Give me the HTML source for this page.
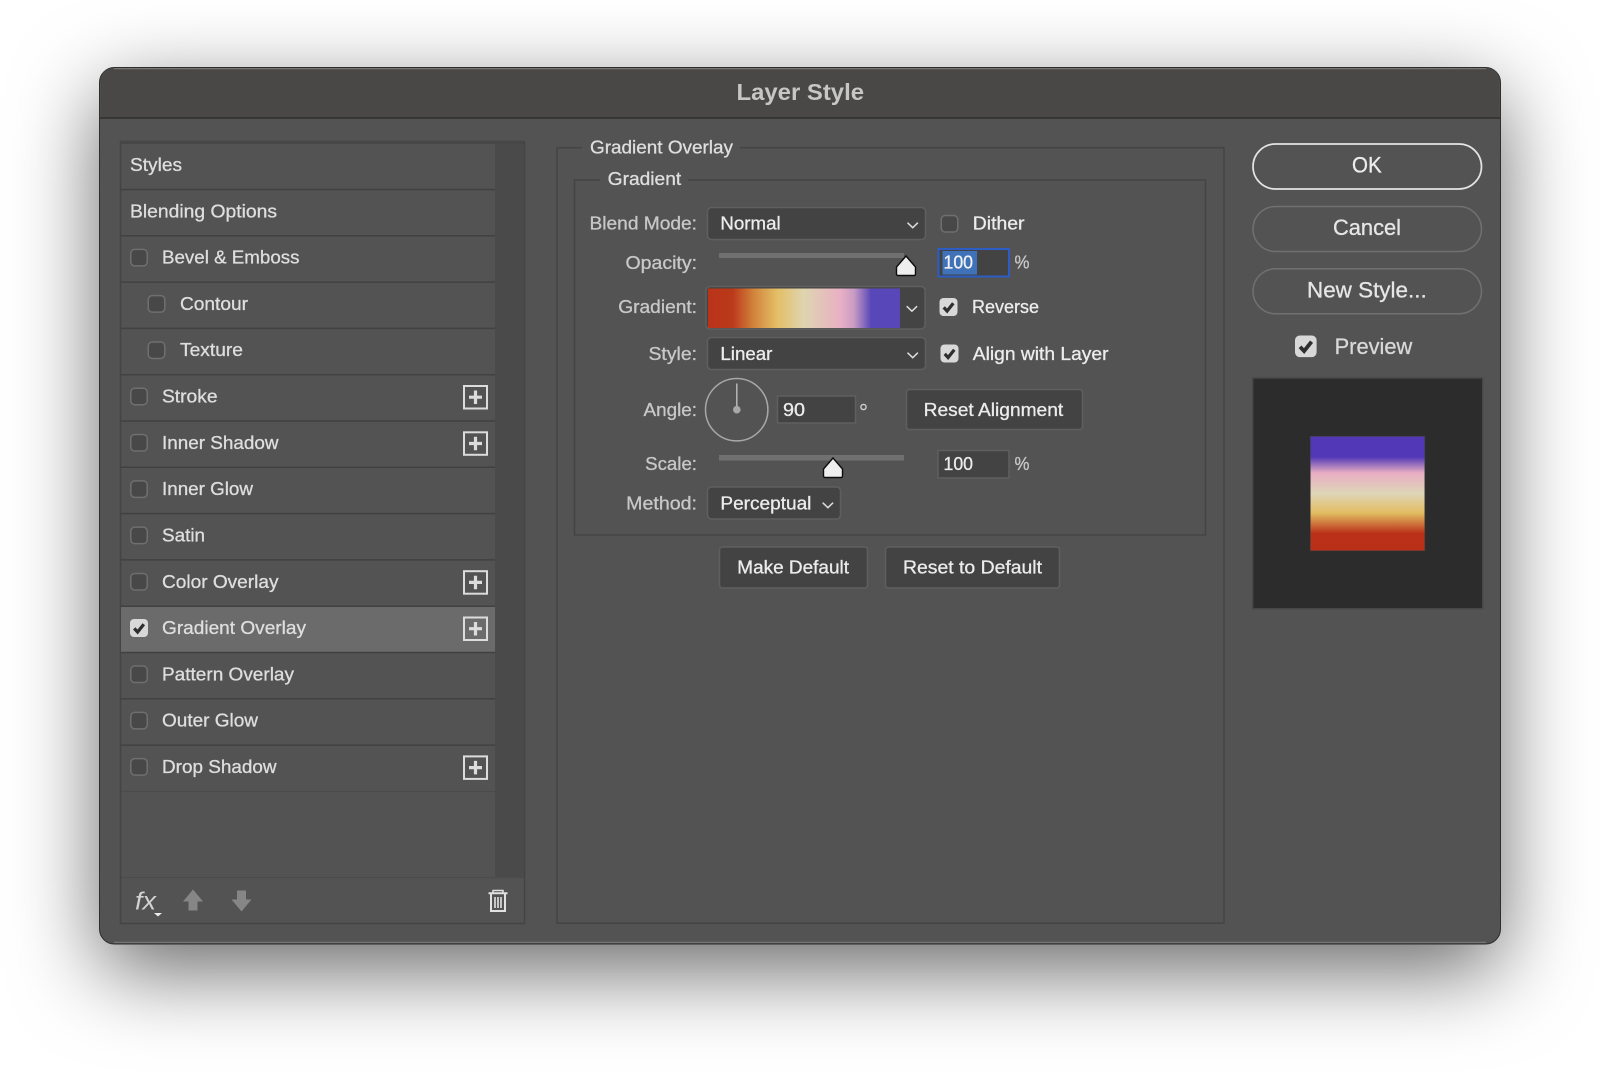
<!DOCTYPE html>
<html lang="en">
<head>
<meta charset="utf-8">
<title>Layer Style</title>
<style>
html,body{margin:0;padding:0;width:1600px;height:1076px;background:#fff;overflow:hidden}
#shadow{position:absolute;left:100px;top:68px;width:1400px;height:876px;border-radius:16px;background:#535353;box-shadow:0 26px 85px rgba(0,0,0,.6)}
svg{position:absolute;left:0;top:0}
text{font-family:"Liberation Sans",sans-serif;font-size:18.5px;fill:#dedede;stroke:#dedede;stroke-width:.3px}
.lab{fill:#c8c8c8;stroke:#c8c8c8}
.w{fill:#ececec;stroke:#ececec}
</style>
</head>
<body>
<div id="shadow"></div>
<svg width="1600" height="1076" viewBox="0 0 1600 1076" xmlns="http://www.w3.org/2000/svg">
<defs>
<linearGradient id="gh" x1="0" x2="1" y1="0" y2="0">
<stop offset="0" stop-color="#b93319"/><stop offset=".13" stop-color="#bb3a1b"/><stop offset=".24" stop-color="#d2853c"/><stop offset=".36" stop-color="#e3bf66"/><stop offset=".5" stop-color="#dfd4b0"/><stop offset=".69" stop-color="#e9b0c4"/><stop offset=".76" stop-color="#c99cc4"/><stop offset=".85" stop-color="#5847b8"/><stop offset="1" stop-color="#5847b8"/>
</linearGradient>
<linearGradient id="gv" x1="0" x2="0" y1="0" y2="1">
<stop offset="0" stop-color="#5238b6"/><stop offset=".18" stop-color="#5238b6"/><stop offset=".32" stop-color="#e8aec3"/><stop offset=".5" stop-color="#dfd5b8"/><stop offset=".67" stop-color="#e2bd62"/><stop offset=".85" stop-color="#ba3018"/><stop offset="1" stop-color="#ba2f18"/>
</linearGradient>
<g id="cb"><rect x=".75" y=".75" width="16.5" height="16.5" rx="4" fill="#484848" stroke="#6f6f6f" stroke-width="1.5"/></g>
<g id="ck"><rect x="0" y="0" width="18" height="18" rx="4" fill="#d8d8d8"/><path d="M4.2 9.4L7.6 13L13.8 5.2" fill="none" stroke="#2f2f2f" stroke-width="3.2"/></g>
<g id="plus"><rect x="1" y="1" width="23" height="22.5" fill="none" stroke="#dcdcdc" stroke-width="2"/><path d="M12.5 5.5V19M6 12.2H19" stroke="#dcdcdc" stroke-width="3.2" fill="none"/></g>
<g id="chev"><path d="M0 0L5.2 5L10.4 0" fill="none" stroke="#dcdcdc" stroke-width="1.5"/></g>
<g id="thumb"><path d="M10 0L19.5 11V18Q19.5 19.5 18 19.5H2Q.5 19.5 .5 18V11Z" fill="#eeeeee" stroke="#0c0c0c" stroke-width="1.4"/></g>
</defs>

<!-- dialog -->
<rect x="99.5" y="67.5" width="1401" height="876.5" rx="15" fill="#535353" stroke="#2e2e2e" stroke-width="1"/>
<path d="M100.5 118V82Q100.5 68.5 114 68.5H1486Q1499.5 68.5 1499.5 82V118Z" fill="#494846"/>
<path d="M114 68.7H1486" stroke="#7a7a7a" stroke-width="1.2"/>
<path d="M114 942.3H1486" stroke="#7a7a7a" stroke-width="1.2"/>
<path d="M100 118H1500" stroke="#2f2f2f" stroke-width="1.6"/>
<text x="736.5" y="100" textLength="127.5" lengthAdjust="spacingAndGlyphs" style="font-weight:700;font-size:23px;fill:#c6c6c6;stroke:none">Layer Style</text>

<!-- left panel -->
<rect x="120.5" y="141.5" width="404" height="782" fill="#535353" stroke="#444" stroke-width="1.5"/>
<rect x="121" y="141" width="403" height="3" fill="#474747"/>
<rect x="495" y="144" width="29" height="733" fill="#4a4a4a"/>
<rect x="121" y="607" width="374" height="45" fill="#6b6b6b"/>
<path d="M121 189.5H495M121 235.8H495M121 282.1H495M121 328.4H495M121 374.7H495M121 421H495M121 467.3H495M121 513.6H495M121 559.9H495M121 606.2H495M121 652.5H495M121 698.8H495M121 745.1H495" stroke="#414141" stroke-width="1.5" fill="none"/>
<path d="M121 791.5H495" stroke="#4b4b4b" stroke-width="1.2"/>
<path d="M121 877.5H524" stroke="#4b4b4b" stroke-width="1.2"/>

<text x="130" y="171" textLength="52" lengthAdjust="spacingAndGlyphs">Styles</text>
<text x="130" y="217.3" textLength="147" lengthAdjust="spacingAndGlyphs">Blending Options</text>
<use href="#cb" x="130" y="248.6"/><text x="162" y="263.6" textLength="137.5" lengthAdjust="spacingAndGlyphs">Bevel &amp; Emboss</text>
<use href="#cb" x="147.5" y="294.9"/><text x="180" y="309.9" textLength="68" lengthAdjust="spacingAndGlyphs">Contour</text>
<use href="#cb" x="147.5" y="341.2"/><text x="180" y="356.2" textLength="63" lengthAdjust="spacingAndGlyphs">Texture</text>
<use href="#cb" x="130" y="387.5"/><text x="162" y="402.5" textLength="55.5" lengthAdjust="spacingAndGlyphs">Stroke</text><use href="#plus" x="463" y="385"/>
<use href="#cb" x="130" y="433.8"/><text x="162" y="448.8" textLength="116.5" lengthAdjust="spacingAndGlyphs">Inner Shadow</text><use href="#plus" x="463" y="431.3"/>
<use href="#cb" x="130" y="480.1"/><text x="162" y="495.1" textLength="91" lengthAdjust="spacingAndGlyphs">Inner Glow</text>
<use href="#cb" x="130" y="526.4"/><text x="162" y="541.4" textLength="43" lengthAdjust="spacingAndGlyphs">Satin</text>
<use href="#cb" x="130" y="572.7"/><text x="162" y="587.9" textLength="116.5" lengthAdjust="spacingAndGlyphs">Color Overlay</text><use href="#plus" x="463" y="570.2"/>
<use href="#ck" x="130" y="619"/><text x="162" y="634" textLength="144" lengthAdjust="spacingAndGlyphs">Gradient Overlay</text><use href="#plus" x="463" y="616.5"/>
<use href="#cb" x="130" y="665.3"/><text x="162" y="680.3" textLength="132" lengthAdjust="spacingAndGlyphs">Pattern Overlay</text>
<use href="#cb" x="130" y="711.6"/><text x="162" y="726.6" textLength="96" lengthAdjust="spacingAndGlyphs">Outer Glow</text>
<use href="#cb" x="130" y="757.9"/><text x="162" y="773.1" textLength="114.5" lengthAdjust="spacingAndGlyphs">Drop Shadow</text><use href="#plus" x="463" y="755.4"/>

<!-- footer icons -->
<text x="135" y="909.5" textLength="21" lengthAdjust="spacingAndGlyphs" style="font-style:italic;font-size:25px;fill:#d2d2d2;stroke:none">fx</text>
<path d="M154 913H162L158 916.5Z" fill="#ececec"/>
<path d="M193 889.5L203 901.5H197.5V910.5H188.5V901.5H183Z" fill="#868686"/>
<path d="M241.5 911.5L251.5 899.5H246V890.5H237V899.5H231.5Z" fill="#868686"/>
<g fill="none" stroke="#e2e2e2">
<path d="M488.5 893.2H507.5" stroke-width="2"/>
<path d="M493 893V890.5H503V893" stroke-width="1.5"/>
<path d="M491 894V911H505V894" stroke-width="2"/>
<path d="M495 897V908M498 897V908M501 897V908" stroke-width="1.6"/>
</g>

<!-- Gradient Overlay fieldset -->
<rect x="557" y="147.7" width="667" height="775.5" fill="none" stroke="#444" stroke-width="1.5"/>
<rect x="582" y="140" width="158" height="16" fill="#535353"/>
<text x="590" y="153.3" textLength="143" lengthAdjust="spacingAndGlyphs">Gradient Overlay</text>
<rect x="574.5" y="180" width="631" height="355" fill="none" stroke="#444" stroke-width="1.5"/>
<rect x="600" y="172" width="88" height="16" fill="#535353"/>
<text x="607.7" y="185" textLength="73.5" lengthAdjust="spacingAndGlyphs">Gradient</text>

<!-- labels -->
<text class="lab" x="589.5" y="229.6" textLength="107.5" lengthAdjust="spacingAndGlyphs">Blend Mode:</text>
<text class="lab" x="625.5" y="269.2" textLength="71.5" lengthAdjust="spacingAndGlyphs">Opacity:</text>
<text class="lab" x="618.3" y="313.2" textLength="78.7" lengthAdjust="spacingAndGlyphs">Gradient:</text>
<text class="lab" x="648.5" y="360" textLength="48.5" lengthAdjust="spacingAndGlyphs">Style:</text>
<text class="lab" x="643.5" y="416.2" textLength="53.5" lengthAdjust="spacingAndGlyphs">Angle:</text>
<text class="lab" x="645.2" y="470" textLength="51.8" lengthAdjust="spacingAndGlyphs">Scale:</text>
<text class="lab" x="626.2" y="509.5" textLength="70.8" lengthAdjust="spacingAndGlyphs">Method:</text>

<!-- blend select -->
<rect x="707.5" y="207.5" width="218" height="32" rx="4" fill="#434343" stroke="#5f5f5f" stroke-width="1.5"/>
<text class="w" x="720.4" y="229.6" textLength="60.3" lengthAdjust="spacingAndGlyphs">Normal</text>
<use href="#chev" x="907.5" y="222.7"/>
<use href="#cb" x="940.5" y="214.8"/>
<text class="w" x="972.8" y="229.6" textLength="51.7" lengthAdjust="spacingAndGlyphs">Dither</text>

<!-- opacity -->
<rect x="719" y="253" width="185" height="5" fill="#707070"/>
<use href="#thumb" x="896" y="256"/>
<rect x="938.5" y="249" width="70.5" height="27.5" fill="#434343" stroke="#2d5cc4" stroke-width="2"/>
<rect x="942.5" y="251" width="34.5" height="23.5" fill="#3f72b8"/>
<text x="943.5" y="268.5" textLength="29.5" lengthAdjust="spacingAndGlyphs" style="fill:#f2f2f2;stroke:#f2f2f2">100</text>
<text class="lab" x="1014.5" y="268.5" textLength="15" lengthAdjust="spacingAndGlyphs">%</text>

<!-- gradient -->
<rect x="706" y="286.5" width="219" height="42.5" rx="4" fill="#444" stroke="#5f5f5f" stroke-width="1.5"/>
<rect x="708" y="288.5" width="192" height="39.5" fill="url(#gh)"/>
<use href="#chev" x="906.7" y="306.2"/>
<use href="#ck" x="939.5" y="298"/>
<text class="w" x="972" y="313.2" textLength="67" lengthAdjust="spacingAndGlyphs">Reverse</text>

<!-- style -->
<rect x="707.5" y="337.5" width="218" height="32" rx="4" fill="#434343" stroke="#5f5f5f" stroke-width="1.5"/>
<text class="w" x="720.4" y="360" textLength="52" lengthAdjust="spacingAndGlyphs">Linear</text>
<use href="#chev" x="907.5" y="352.7"/>
<use href="#ck" x="940.5" y="344.5"/>
<text class="w" x="972.8" y="360" textLength="135.7" lengthAdjust="spacingAndGlyphs">Align with Layer</text>

<!-- angle -->
<circle cx="736.7" cy="409.7" r="31.2" fill="none" stroke="#a8a8a8" stroke-width="1.5"/>
<path d="M736.8 383.5V409" stroke="#b8b8b8" stroke-width="1.5"/>
<circle cx="736.8" cy="409.7" r="3.8" fill="#a8a8a8"/>
<rect x="777.5" y="396" width="78" height="27" fill="#434343" stroke="#5f5f5f" stroke-width="1.5"/>
<text class="w" x="783" y="416.2" textLength="22" lengthAdjust="spacingAndGlyphs">90</text>
<circle cx="863.5" cy="407" r="2.6" fill="none" stroke="#cfcfcf" stroke-width="1.4"/>
<rect x="906.5" y="389.5" width="176" height="40" rx="3" fill="#434343" stroke="#5f5f5f" stroke-width="1.5"/>
<text class="w" x="923.7" y="416.2" textLength="139.5" lengthAdjust="spacingAndGlyphs">Reset Alignment</text>

<!-- scale -->
<rect x="719" y="455" width="185" height="5.5" fill="#707070"/>
<use href="#thumb" x="823" y="458"/>
<rect x="938" y="450.5" width="71" height="27.5" fill="#434343" stroke="#5f5f5f" stroke-width="1.5"/>
<text class="w" x="943.5" y="470" textLength="29.5" lengthAdjust="spacingAndGlyphs">100</text>
<text class="lab" x="1014.5" y="470" textLength="15" lengthAdjust="spacingAndGlyphs">%</text>

<!-- method -->
<rect x="707.5" y="487" width="133" height="32" rx="4" fill="#434343" stroke="#5f5f5f" stroke-width="1.5"/>
<text class="w" x="720.4" y="509.5" textLength="91" lengthAdjust="spacingAndGlyphs">Perceptual</text>
<use href="#chev" x="822.7" y="502.7"/>

<!-- default buttons -->
<rect x="719.5" y="547" width="148" height="41" rx="3" fill="#434343" stroke="#5f5f5f" stroke-width="1.5"/>
<text class="w" x="737.3" y="573.3" textLength="111.7" lengthAdjust="spacingAndGlyphs">Make Default</text>
<rect x="885.5" y="547" width="174" height="41" rx="3" fill="#434343" stroke="#5f5f5f" stroke-width="1.5"/>
<text class="w" x="903" y="573.3" textLength="139" lengthAdjust="spacingAndGlyphs">Reset to Default</text>

<!-- right column -->
<rect x="1253" y="144" width="228.5" height="45" rx="22.5" fill="#535353" stroke="#e4e4e4" stroke-width="1.7"/>
<text x="1352" y="172.3" textLength="29.7" lengthAdjust="spacingAndGlyphs" style="font-size:22.5px;fill:#ececec;stroke:#ececec">OK</text>
<rect x="1253" y="206.5" width="228.5" height="45" rx="22.5" fill="#535353" stroke="#707070" stroke-width="1.5"/>
<text x="1333" y="235" textLength="68" lengthAdjust="spacingAndGlyphs" style="font-size:22.5px;fill:#e6e6e6;stroke:#e6e6e6">Cancel</text>
<rect x="1253" y="268.8" width="228.5" height="45" rx="22.5" fill="#535353" stroke="#707070" stroke-width="1.5"/>
<text x="1307" y="297.4" textLength="119.7" lengthAdjust="spacingAndGlyphs" style="font-size:22.5px;fill:#e6e6e6;stroke:#e6e6e6">New Style...</text>
<g transform="translate(1295 335.5) scale(1.2)"><use href="#ck"/></g>
<text x="1334.6" y="354" textLength="77.7" lengthAdjust="spacingAndGlyphs" style="font-size:22.5px;fill:#d8d8d8;stroke:#d8d8d8">Preview</text>

<rect x="1252.7" y="378" width="230" height="230.7" fill="#2c2c2c" stroke="#474747" stroke-width="1.5"/>
<rect x="1310.3" y="436.3" width="114.5" height="114.5" fill="url(#gv)" stroke="#3f3f3f" stroke-width=".6"/>
</svg>
</body>
</html>
